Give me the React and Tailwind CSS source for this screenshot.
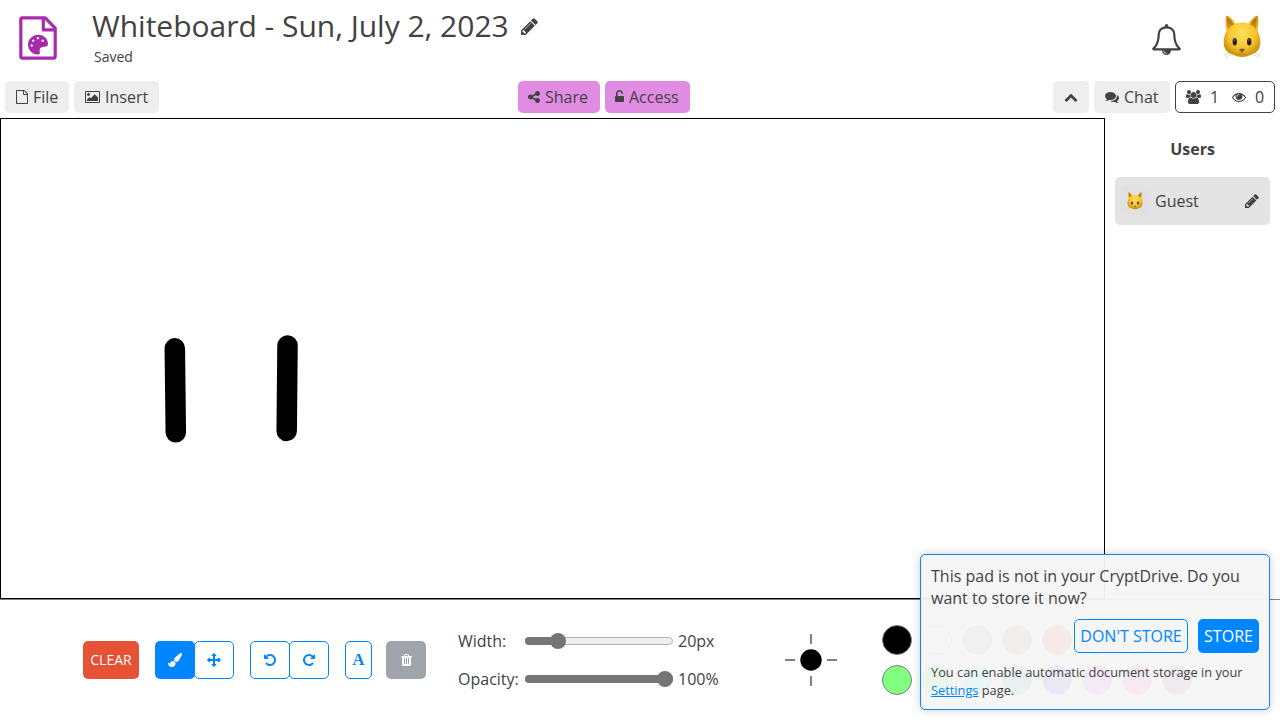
const PATHS = {
  pencil: "M491 1536l91-91-235-235-91 91v107h128v128h107zm523-928q0-22-22-22-10 0-17 7l-542 542q-7 7-7 17 0 22 22 22 10 0 17-7l542-542q7-7 7-17zm-54-192l416 416-832 832h-416v-416zm683 96q0 53-37 90l-166 166-416-416 166-165q36-38 90-38 53 0 91 38l235 234q37 39 37 91z",
  file: "M1596 380q28 28 48 76t20 88v1152q0 40-28 68t-68 28h-1344q-40 0-68-28t-28-68v-1600q0-40 28-68t68-28h896q40 0 88 20t76 48zm-444-244v376h376q-10-29-22-41l-313-313q-12-12-41-22zm384 1528v-1024h-416q-40 0-68-28t-28-68v-416h-768v1536h1280z",
  image: "M576 576q0 80-56 136t-136 56-136-56-56-136 56-136 136-56 136 56 56 136zm1024 384v448h-1408v-192l320-320 160 160 512-512zm96-704h-1600q-13 0-22.5 9.5t-9.5 22.5v1216q0 13 9.5 22.5t22.5 9.5h1600q13 0 22.5-9.5t9.5-22.5v-1216q0-13-9.5-22.5t-22.5-9.5zm160 32v1216q0 66-47 113t-113 47h-1600q-66 0-113-47t-47-113v-1216q0-66 47-113t113-47h1600q66 0 113 47t47 113z",
  share: "M1344 1024q133 0 226.5 93.5t93.5 226.5-93.5 226.5-226.5 93.5-226.5-93.5-93.5-226.5q0-12 2-34l-360-180q-92 86-218 86-133 0-226.5-93.5t-93.5-226.5 93.5-226.5 226.5-93.5q126 0 218 86l360-180q-2-22-2-34 0-133 93.5-226.5t226.5-93.5 226.5 93.5 93.5 226.5-93.5 226.5-226.5 93.5q-126 0-218-86l-360 180q2 22 2 34t-2 34l360 180q92-86 218-86z",
  unlock: "M1376 768q40 0 68 28t28 68v576q0 40-28 68t-68 28h-960q-40 0-68-28t-28-68v-576q0-40 28-68t68-28h32v-320q0-185 131.5-316.5t316.5-131.5 316.5 131.5 131.5 316.5q0 26-19 45t-45 19h-64q-26 0-45-19t-19-45q0-106-75-181t-181-75-181 75-75 181v320h736z",
  up: "M1683 1331l-166 165q-19 19-45 19t-45-19l-531-531-531 531q-19 19-45 19t-45-19l-166-165q-19-19-19-45.5t19-45.5l742-741q19-19 45-19t45 19l742 741q19 19 19 45.5t-19 45.5z",
  comments: "M1408 768q0 139-94 257t-256.5 186.5-353.5 68.5q-86 0-176-16-124 88-278 128-36 9-86 16h-3q-11 0-20.5-8t-11.5-21q-1-3-1-6.5t.5-6.5 2-6l2.5-5 3.5-5.5 4-5 4.5-5 4-4.5q5-6 23-25t26-29.5 22.5-29 25-38.5 20.5-44q-124-72-195-177t-71-224q0-139 94-257t256.5-186.5 353.5-68.5 353.5 68.5 256.5 186.5 94 257zm384 256q0 120-71 224.5t-195 176.5q10 24 20.5 44t25 38.5 22.5 29 26 29.5 23 25q1 1 4 4.5t4.5 5 4 5 3.5 5.5l2.5 5 2 6 .5 6.5-1 6.5q-3 14-13 22t-22 7q-50-7-86-16-154-40-278-128-90 16-176 16-271 0-472-132 58 4 88 4 161 0 309-45t264-129q125-92 192-212t67-254q0-77-23-152 129 71 204 178t75 230z",
  users: "M593 896q-162 5-265 128h-134q-82 0-138-40.5t-56-118.5q0-353 124-353 6 0 43.5 21t97.5 42.5 119 21.5q67 0 133-23-5 37-5 66 0 139 81 256zm1071 637q0 120-73 189.5t-194 69.5h-874q-121 0-194-69.5t-73-189.5q0-53 3.5-103.5t14-109 26.5-108.5 43-97.5 62-81 85.5-53.5 111.5-20q10 0 43 21.5t73 48 107 48 135 21.5 135-21.5 107-48 73-48 43-21.5q61 0 111.5 20t85.5 53.5 62 81 43 97.5 26.5 108.5 14 109 3.5 103.5zm-1024-1277q0 106-75 181t-181 75-181-75-75-181 75-181 181-75 181 75 75 181zm704 384q0 159-112.5 271.5t-271.5 112.5-271.5-112.5-112.5-271.5 112.5-271.5 271.5-112.5 271.5 112.5 112.5 271.5zm576 225q0 78-56 118.5t-138 40.5h-134q-103-123-265-128 81-117 81-256 0-29-5-66 66 23 133 23 59 0 119-21.5t97.5-42.5 43.5-21q124 0 124 353zm-128-609q0 106-75 181t-181 75-181-75-75-181 75-181 181-75 181 75 75 181z",
  eye: "M1664 960q-152-236-381-353 61 104 61 225 0 185-131.5 316.5t-316.5 131.5-316.5-131.5-131.5-316.5q0-121 61-225-229 117-381 353 133 205 333.5 326.5t434.5 121.5 434.5-121.5 333.5-326.5zm-720-384q0-20-14-34t-34-14q-125 0-214.5 89.5t-89.5 214.5q0 20 14 34t34 14 34-14 14-34q0-86 61-147t147-61q20 0 34-14t14-34zm848 384q0 34-20 69-140 230-376.5 368.5t-499.5 138.5-499.5-139-376.5-368q-20-35-20-69t20-69q140-229 376.5-368t499.5-139 499.5 139 376.5 368q20 35 20 69z",
  bell: "M912 1696q0-16-16-16-59 0-101.5-42.5t-42.5-101.5q0-16-16-16t-16 16q0 73 51.5 124.5t124.5 51.5q16 0 16-16zm-666-288h1300q-266-300-266-832 0-51-24-105t-69-103-121.5-80.5-169.5-31.5-169.5 31.5-121.5 80.5-69 103-24 105q0 532-266 832zm1482 0q0 52-38 90t-90 38h-448q0 106-75 181t-181 75-181-75-75-181h-448q-52 0-90-38t-38-90q50-42 91-88t85-119.5 74.5-158.5 50-206 19.5-260q0-152 117-282.5t307-158.5q-8-19-8-39 0-40 28-68t68-28 68 28 28 68q0 20-8 39 190 28 307 158.5t117 282.5q0 139 19.5 260t50 206 74.5 158.5 85 119.5 91 88z",
  brush: "M1615 0q70 0 122.5 46.5t52.5 116.5q0 63-45 151-332 629-465 752-97 91-218 91-126 0-216.5-92.5t-90.5-219.5q0-128 92-212l638-579q59-54 130-54zm-909 1034q39 76 106.5 130t150.5 76l1 71q4 213-129.5 347t-348.5 134q-123 0-218-46.5t-152.5-127.5-86.5-183-29-220q7 5 41 30t62 44.5 59 36.5 46 17q41 0 55-37 25-66 57.5-112.5t69.5-76 88-47.5 103-25.5 125-10.5z",
  arrows: "M1792 896q0 26-19 45l-256 256q-19 19-45 19t-45-19-19-45v-128h-384v384h128q26 0 45 19t19 45-19 45l-256 256q-19 19-45 19t-45-19l-256-256q-19-19-19-45t19-45 45-19h128v-384h-384v128q0 26-19 45t-45 19-45-19l-256-256q-19-19-19-45t19-45l256-256q19-19 45-19t45 19 19 45v128h384v-384h-128q-26 0-45-19t-19-45 19-45l256-256q19-19 45-19t45 19l256 256q19 19 19 45t-19 45-45 19h-128v384h384v-128q0-26 19-45t45-19 45 19l256 256q19 19 19 45z",
  undo: "M1664 896q0 156-61 298t-164 245-245 164-298 61q-172 0-327-72.5t-264-204.5q-7-10-6.5-22.5t8.5-20.5l137-138q10-9 25-9 16 2 23 12 73 95 179 147t225 52q104 0 198.5-40.5t163.5-109.5 109.5-163.5 40.5-198.5-40.5-198.5-109.5-163.5-163.5-109.5-198.5-40.5q-98 0-188 35.5t-160 101.5l137 138q31 30 14 69-17 40-59 40h-448q-26 0-45-19t-19-45v-448q0-42 40-59 39-17 69 14l130 129q107-101 244.5-156.5t284.5-55.5q156 0 298 61t245 164 164 245 61 298z",
  trash: "M704 1376v-704q0-14-9-23t-23-9h-64q-14 0-23 9t-9 23v704q0 14 9 23t23 9h64q14 0 23-9t9-23zm256 0v-704q0-14-9-23t-23-9h-64q-14 0-23 9t-9 23v704q0 14 9 23t23 9h64q14 0 23-9t9-23zm256 0v-704q0-14-9-23t-23-9h-64q-14 0-23 9t-9 23v704q0 14 9 23t23 9h64q14 0 23-9t9-23zm-544-992h448l-48-117q-7-9-17-11h-317q-10 2-17 11zm928 32v64q0 14-9 23t-23 9h-96v948q0 83-47 143.5t-113 60.5h-832q-66 0-113-58.5t-47-141.5v-952h-96q-14 0-23-9t-9-23v-64q0-14 9-23t23-9h309l70-167q15-37 54-63t79-26h320q40 0 79 26t54 63l70 167h309q14 0 23 9t9 23z",
};

function Icon({ name, vb = "0 0 1792 1792", className = "" }) {
  return (
    <svg viewBox={vb} className={"shrink-0 fill-current " + className} aria-hidden="true">
      <path d={PATHS[name]} />
    </svg>
  );
}

function PadLogo() {
  return (
    <svg viewBox="0 0 38 44" className="h-11 w-[38px] shrink-0" aria-hidden="true">
      <g fill="none" stroke="#a62cac" strokeWidth="3.2" strokeLinejoin="round">
        <path d="M3.300 1.900H26.200L36.200 12.200V40.600Q36.200 42.100 34.700 42.100H3.300Q1.800 42.100 1.800 40.600V3.400Q1.800 1.900 3.300 1.900Z" />
        <path d="M24.300 2V13.900H36" />
      </g>
      <path
        fill="#a62cac"
        fillRule="evenodd"
        d="M19.3 18.8C13.6 18.8 9 23.2 9 28.6S13.200 38.600 18.600 38.600C20.600 38.600 21.200 37.400 20.800 35.700C20.200 33.200 21.200 31.400 23.600 31L26.700 30.500C28.300 30.200 29 29.400 29 28C29 22.800 24.700 18.800 19.300 18.800ZM12.700 28.300a1.200 1.200 0 1 0 .01 0ZM14.200 23.400a1.200 1.200 0 1 0 .01 0ZM18.900 20.900a1.200 1.200 0 1 0 .01 0ZM23.700 23.400a1.200 1.200 0 1 0 .01 0Z"
      />
    </svg>
  );
}

function Cat({ id, className }) {
  const face = "face" + id;
  const ear = "ear" + id;
  return (
    <svg viewBox="0 0 38 44" className={"shrink-0 " + className} aria-hidden="true">
      <defs>
        <radialGradient id={face} cx="50%" cy="42%" r="60%">
          <stop offset="0" stopColor="#ffdf5a" />
          <stop offset=".6" stopColor="#f7c62f" />
          <stop offset="1" stopColor="#c98a0a" />
        </radialGradient>
        <linearGradient id={ear} x1="0" y1="0" x2="0" y2="1">
          <stop offset="0" stopColor="#9a690f" />
          <stop offset="1" stopColor="#dba320" />
        </linearGradient>
      </defs>
      <path fill="none" stroke="#ddd5c8" strokeWidth=".9" strokeLinecap="round" d="M6 37.500L.8 41M8 39L2.500 42.500M32 37.500L37.200 41M30 39L35.500 42.500" />
      <path
        fill={"url(#" + face + ")"}
        d="M3.400 1C4.300-.1 6.500 1.600 8.800 3.800C10.600 5.500 12 7.300 12.600 8.500Q19 6.300 25.400 8.500C26 7.300 27.400 5.500 29.200 3.800C31.500 1.600 33.700-.1 34.600 1C35.800 3 35.500 11 34.400 15.500C36.500 20 37.500 24 37.300 28.500C37 35 32.500 38 28 39.800Q19 44.200 10 39.800C5.500 38 1 35 .7 28.500C.5 24 1.500 20 3.600 15.500C2.500 11 2.200 3 3.400 1Z"
      />
      <path fill={"url(#" + ear + ")"} d="M4.800 3.200C6.900 4 10 7.300 11 9.500Q7.400 11 5.200 14.300C4.500 11 4.300 6 4.800 3.200ZM33.200 3.200C31.100 4 28 7.300 27 9.500Q30.600 11 32.800 14.300C33.500 11 33.700 6 33.200 3.200Z" />
      <ellipse cx="11.800" cy="26.800" rx="2.200" ry="3.800" fill="#241f18" />
      <ellipse cx="26.200" cy="26.800" rx="2.200" ry="3.800" fill="#241f18" />
      <circle cx="11.600" cy="25" r=".7" fill="#999" />
      <circle cx="26" cy="25" r=".7" fill="#999" />
      <path fill="#82603c" d="M16.200 34.200Q19 32.800 21.800 34.200Q21.500 36.800 19 37.300Q16.500 36.800 16.200 34.200Z" />
      <path fill="none" stroke="#b57d0f" strokeWidth=".8" strokeLinecap="round" d="M19 37V38.500M15 39Q17.500 40.500 19 38.500Q20.500 40.500 23 39" />
    </svg>
  );
}

function Slider({ kind }) {
  return (
    <div className="relative flex h-4 w-[148px] items-center">
      <div className="h-2 w-full overflow-hidden rounded-full border border-[#b2b2b2] bg-[#efefef]" />
      <div className={"absolute left-0 top-1 h-2 rounded-full bg-[#757575] " + (kind === "width" ? "w-[33px]" : "w-full")} />
      <div className={"absolute top-0 size-4 rounded-full bg-[#757575] " + (kind === "width" ? "left-[25px]" : "right-0")} />
    </div>
  );
}

const TOP_COLORS = ["bg-black", "bg-white", "bg-[#808080]", "bg-[#a05020]", "bg-[#ff0000]", "bg-[#ff8000]", "bg-[#ffc000]", "bg-[#ffff00]"];
const BOTTOM_COLORS = ["bg-[#80ff80]", "bg-[#00ff00]", "bg-[#00ffff]", "bg-[#008080]", "bg-[#0000ff]", "bg-[#ff00ff]", "bg-[#ff00a0]", "bg-[#800080]"];

function Swatches({ colors }) {
  return (
    <div className="flex gap-2.5">
      {colors.map((c) => (
        <div key={c} className={"size-[30px] shrink-0 rounded-full border border-[#808080] " + c} />
      ))}
    </div>
  );
}

const TOOL = "flex h-[38px] items-center justify-center rounded-[5px] border border-[#0087ff] text-[#0087ff]";

export default function App() {
  return (
    <div className="relative flex h-[720px] w-[1280px] flex-col overflow-hidden bg-white font-['Open_Sans',sans-serif] text-[16px] leading-6 text-[#424242]">
      <header className="flex h-[76px] shrink-0 items-start justify-between pl-[19px] pr-[19px]">
        <div className="flex">
          <div className="pt-4">
            <PadLogo />
          </div>
          <div className="flex flex-col pl-[35px] pt-[5px]">
            <div className="flex items-center gap-3">
              <h1 className="whitespace-nowrap text-[30px] leading-[42px] tracking-[-0.015px]">Whiteboard - Sun, July 2, 2023</h1>
              <Icon name="pencil" vb="128 128 1536 1536" className="size-[17px]" />
            </div>
            <span className="pl-0.5 text-[14px] leading-5">Saved</span>
          </div>
        </div>
        <div className="flex items-start gap-[42px] pt-[15px]">
          <Icon name="bell" vb="64 0 1664 1792" className="mt-[9px] h-[31px] w-[29px]" />
          <Cat id="Header" className="h-11 w-[38px]" />
        </div>
      </header>

      <nav className="grid h-[42px] shrink-0 grid-cols-[513px_1fr_auto] px-[5px] pt-[5px]">
        <div className="flex gap-[5px]">
          <button className="flex h-8 w-16 items-center gap-[5px] rounded-[5px] bg-[#eeeeee] pl-[11px]">
            <Icon name="file" vb="128 0 1536 1792" className="h-3.5 w-3" />
            File
          </button>
          <button className="flex h-8 w-[85px] items-center gap-[5px] rounded-[5px] bg-[#eeeeee] pl-[11px]">
            <Icon name="image" vb="-64 0 1920 1792" className="h-3.5 w-[15px]" />
            Insert
          </button>
        </div>
        <div className="flex gap-[5px]">
          <button className="flex h-8 w-[82px] items-center gap-[5px] rounded-[5px] bg-[#e18ce3] pl-2.5">
            <Icon name="share" vb="128 0 1536 1792" className="h-3.5 w-3" />
            Share
          </button>
          <button className="flex h-8 w-[85px] items-center gap-[5px] rounded-[5px] bg-[#e18ce3] pl-2.5">
            <Icon name="unlock" vb="320 0 1152 1792" className="h-3.5 w-[9px]" />
            Access
          </button>
        </div>
        <div className="flex gap-[5px]">
          <button className="flex h-8 w-9 items-center justify-center rounded-[5px] bg-[#eeeeee]">
            <Icon name="up" className="size-3.5" />
          </button>
          <button className="flex h-8 w-[76px] items-center gap-[5px] rounded-[5px] bg-[#eeeeee] pl-[11px]">
            <Icon name="comments" className="size-3.5" />
            Chat
          </button>
          <div className="flex h-8 w-[100px] items-center rounded-[5px] border border-[#424242] pl-2.5">
            <Icon name="users" vb="0 0 1920 1792" className="h-3.5 w-[15px]" />
            <span className="ml-[9px] w-[13px]">1</span>
            <Icon name="eye" className="ml-[9px] size-3.5" />
            <span className="ml-[9px]">0</span>
          </div>
        </div>
      </nav>

      <main className="flex h-[482px] shrink-0 border-b border-[#808080]">
        <div className="h-[481px] w-[1105px] shrink-0 border border-black">
          <svg viewBox="1 119 1103 479" className="h-full w-full">
            <g stroke="#000" strokeWidth="20.500" strokeLinecap="round">
              <path d="M174.800 348.300L175.800 432.300" />
              <path d="M287.500 345.500L286.700 431" />
            </g>
          </svg>
        </div>
        <aside className="flex flex-1 flex-col px-2.5 pt-[19px]">
          <h2 className="text-center font-bold">Users</h2>
          <div className="mt-4 flex h-12 items-center rounded-[5px] bg-[#e4e4e4] px-[5px]">
            <div className="flex size-[30px] items-center justify-center rounded-[5px] bg-[#e1e1e1]">
              <Cat id="User" className="h-[18px] w-4" />
            </div>
            <span className="ml-[5px] flex-1">Guest</span>
            <Icon name="pencil" vb="128 128 1536 1536" className="mr-1.5 size-3.5" />
          </div>
        </aside>
      </main>

      <footer className="flex h-[120px] shrink-0 items-center pl-[83px]">
        <button className="flex h-[38px] w-14 items-center justify-center rounded-[5px] bg-[#e55236] text-[14px] text-white">CLEAR</button>
        <div className="ml-4 flex">
          <button className="flex h-[38px] w-10 items-center justify-center rounded-[5px] bg-[#0087ff] text-white">
            <Icon name="brush" className="size-3.5" />
          </button>
          <button className={TOOL + " -ml-px w-10"}>
            <Icon name="arrows" className="size-3.5" />
          </button>
        </div>
        <div className="ml-4 flex">
          <button className={TOOL + " w-10"}>
            <Icon name="undo" vb="128 0 1536 1792" className="h-3.5 w-3" />
          </button>
          <button className={TOOL + " -ml-px w-10"}>
            <Icon name="undo" vb="128 0 1536 1792" className="h-3.5 w-3 -scale-x-100" />
          </button>
        </div>
        <button className={TOOL + " ml-4 w-[27px] font-['Liberation_Serif',serif] text-[17px] font-bold"}>A</button>
        <button className="ml-3.5 flex h-[38px] w-10 items-center justify-center rounded-[5px] bg-[#a0a5ac] text-white">
          <Icon name="trash" vb="192 0 1408 1792" className="h-3.5 w-[11px]" />
        </button>
        <div className="ml-8 grid w-[265px] grid-cols-[67px_153px_1fr] items-center gap-y-3.5">
          <span>Width:</span>
          <Slider kind="width" />
          <span>20px</span>
          <span>Opacity:</span>
          <Slider kind="opacity" />
          <span>100%</span>
        </div>
        <svg viewBox="0 0 52 52" className="ml-[62px] size-[52px] shrink-0">
          <path stroke="#808080" strokeWidth="2" d="M26 0V10M26 42V52M0 26H10M42 26H52" />
          <circle cx="26" cy="26" r="10.700" />
        </svg>
        <div className="ml-[45px] flex flex-col gap-2.5">
          <Swatches colors={TOP_COLORS} />
          <Swatches colors={BOTTOM_COLORS} />
        </div>
      </footer>

      <section className="absolute bottom-2.5 right-2.5 h-[156px] w-[350px] rounded-[5px] border border-[#0087ff] bg-[#f5f5f5]/95 px-2.5 pt-2.5 shadow-[0_0_10px_rgba(0,0,0,0.2)]">
        <p className="whitespace-nowrap leading-[22px]">
          This pad is not in your CryptDrive. Do you
          <br />
          want to store it now?
        </p>
        <div className="mt-2.5 flex justify-end gap-2.5">
          <button className="flex h-[34px] w-[114px] items-center justify-center whitespace-nowrap rounded-[5px] border border-[#0087ff] bg-[#f5f5f5] text-[#0087ff]">DON'T STORE</button>
          <button className="flex h-[34px] w-[61px] items-center justify-center rounded-[5px] bg-[#0087ff] text-white">STORE</button>
        </div>
        <p className="mt-2.5 whitespace-nowrap text-[12.800px] leading-[18px]">
          You can enable automatic document storage in your
          <br />
          <a className="text-[#0087ff] underline">Settings</a> page.
        </p>
      </section>
    </div>
  );
}
